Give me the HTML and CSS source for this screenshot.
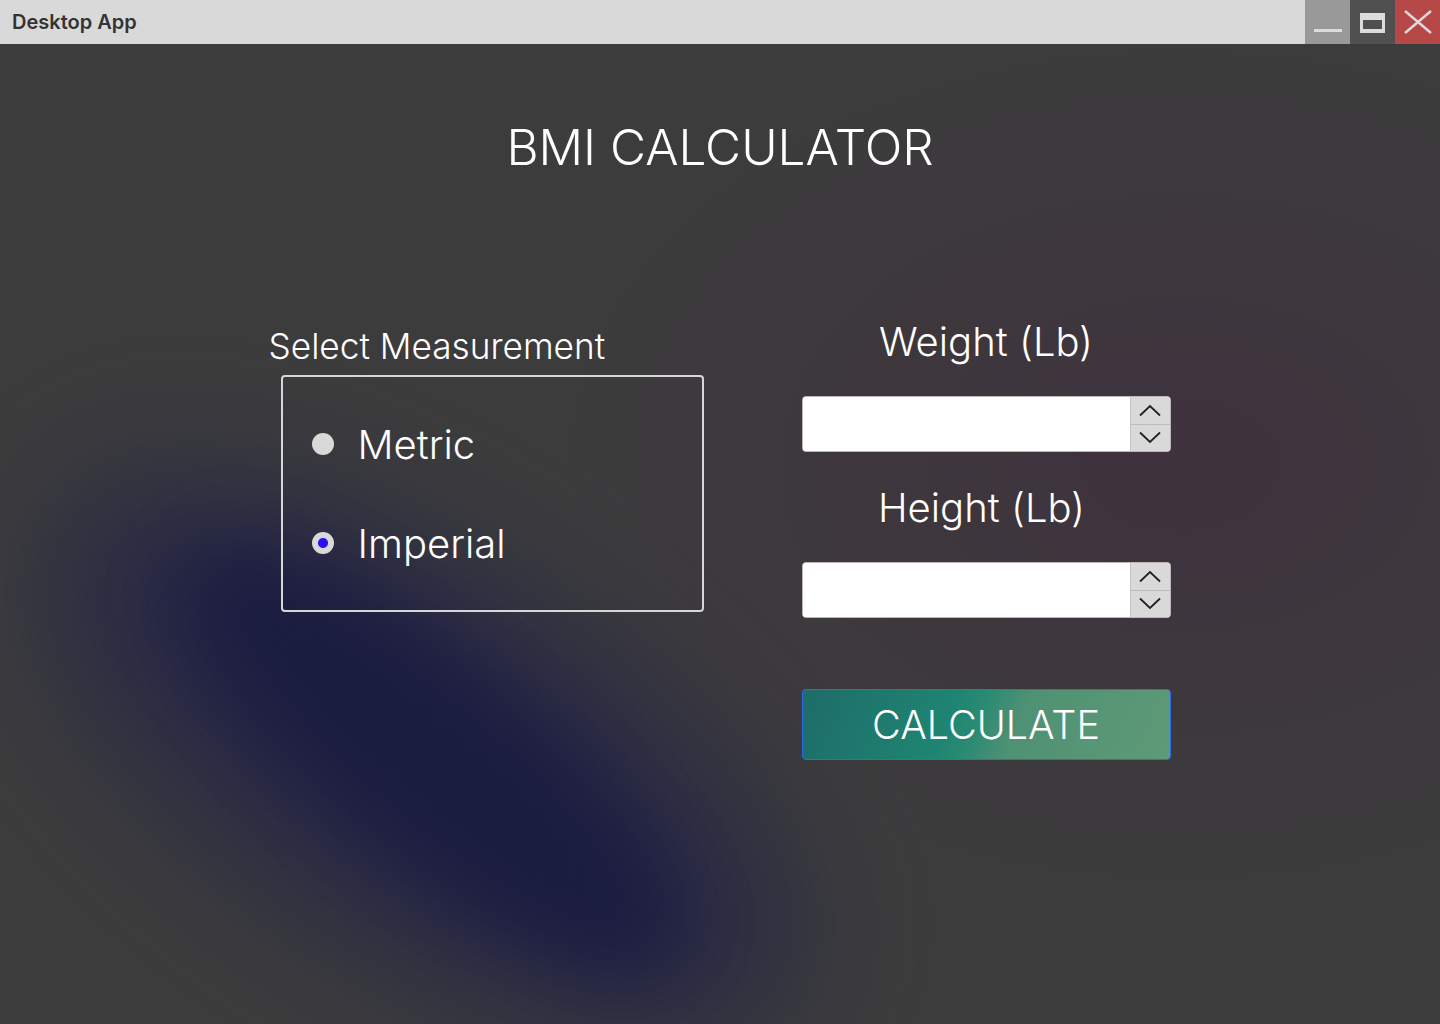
FILE: index.html
```html
<!DOCTYPE html>
<html lang="en">
<head>
<meta charset="utf-8">
<title>Desktop App</title>
<link rel="stylesheet" href="styles.css">
</head>
<body>
<div class="window">
  <header class="titlebar">
    <span class="app-name">Desktop App</span>
    <div class="win-controls">
      <button class="win-btn win-min" aria-label="Minimize"><span class="min-bar"></span></button>
      <button class="win-btn win-max" aria-label="Maximize"><span class="max-box"></span></button>
      <button class="win-btn win-close" aria-label="Close">
        <svg width="28" height="24" viewBox="0 0 28 24"><path d="M1 1 L27 23 M27 1 L1 23" stroke="#dcdcdc" stroke-width="2.4" fill="none"/></svg>
      </button>
    </div>
  </header>
  <main class="app">
    <div class="blob blob-halo"></div>
    <div class="blob blob-core"></div>
    <h1 class="title">BMI CALCULATOR</h1>
    <div class="content">
      <section class="measure">
        <div class="measure-label">Select Measurement</div>
        <div class="measure-box">
          <label class="radio-row"><input type="radio" name="unit" class="radio"><span>Metric</span></label>
          <label class="radio-row"><input type="radio" name="unit" class="radio" checked><span>Imperial</span></label>
        </div>
      </section>
      <section class="fields">
        <div class="field-label">Weight (Lb)</div>
        <div class="spin">
          <input class="spin-input" type="text">
          <div class="spin-btns">
            <button class="spin-btn"><svg width="24" height="13" viewBox="0 0 24 13"><path d="M2 11.5 L12 2 L22 11.5" stroke="#222" stroke-width="1.8" fill="none"/></svg></button>
            <button class="spin-btn"><svg width="24" height="13" viewBox="0 0 24 13"><path d="M2 1.5 L12 11 L22 1.5" stroke="#222" stroke-width="1.8" fill="none"/></svg></button>
          </div>
        </div>
        <div class="field-label second">Height (Lb)</div>
        <div class="spin">
          <input class="spin-input" type="text">
          <div class="spin-btns">
            <button class="spin-btn"><svg width="24" height="13" viewBox="0 0 24 13"><path d="M2 11.5 L12 2 L22 11.5" stroke="#222" stroke-width="1.8" fill="none"/></svg></button>
            <button class="spin-btn"><svg width="24" height="13" viewBox="0 0 24 13"><path d="M2 1.5 L12 11 L22 1.5" stroke="#222" stroke-width="1.8" fill="none"/></svg></button>
          </div>
        </div>
        <button class="calc">CALCULATE</button>
      </section>
    </div>
  </main>
</div>
</body>
</html>
```
FILE: styles.css
```css
* { box-sizing: border-box; }
html, body { margin: 0; padding: 0; }
body {
  width: 1440px;
  height: 1024px;
  overflow: hidden;
  font-family: "Inter", "Noto Sans", sans-serif;
  background: #3c3c3c;
}
.window { display: flex; flex-direction: column; height: 1024px; }

.titlebar {
  height: 44px;
  flex: 0 0 44px;
  background: #d9d9d9;
  display: flex;
  align-items: center;
  justify-content: space-between;
}
.app-name {
  padding-left: 12px;
  font-size: 20px;
  font-weight: 600;
  color: #333;
  padding-bottom: 1px;
}
.win-controls { display: flex; height: 44px; }
.win-btn {
  width: 45px;
  height: 44px;
  border: 0;
  padding: 0;
  margin: 0;
  display: flex;
  align-items: center;
  justify-content: center;
}
.win-min { background: #999999; align-items: flex-end; padding-bottom: 12px; }
.min-bar { display: block; width: 28px; height: 3px; background: #dcdcdc; }
.win-max { background: #505050; }
.max-box {
  display: block;
  width: 25px;
  height: 20px;
  border: 3px solid #dcdcdc;
  border-top-width: 7px;
  border-bottom-width: 4px;
  margin-top: 2px;
}
.win-close { background: #b64848; }

.app {
  position: relative;
  flex: 1;
  overflow: hidden;
  background:
    radial-gradient(ellipse 620px 420px at 1180px 420px, rgba(64, 46, 62, 0.7), rgba(64, 46, 62, 0) 100%),
    #3c3c3c;
  padding-top: 73px;
  color: #fff;
}
.blob {
  position: absolute;
  border-radius: 50%;
  pointer-events: none;
}
.blob-halo {
  left: -10px;
  top: 530px;
  width: 860px;
  height: 370px;
  background: rgba(34, 34, 72, 0.75);
  transform: rotate(33deg);
  filter: blur(70px);
}
.blob-core {
  left: 120px;
  top: 620px;
  width: 620px;
  height: 190px;
  background: #1a1c40;
  transform: rotate(40deg);
  filter: blur(40px);
}
.title {
  position: relative;
  margin: 0;
  text-align: center;
  font-size: 49.5px;
  line-height: 60px;
  font-weight: 300;
  color: #fff;
}
.content {
  position: relative;
  display: flex;
  justify-content: center;
  gap: 98px;
  margin-top: 141px;
}
.measure {
  width: 434px;
  padding-top: 6px;
}
.measure-label {
  font-size: 35.2px;
  line-height: 44px;
  font-weight: 300;
  color: #fff;
  margin-left: -1px;
}
.measure-box {
  margin-top: 7px;
  margin-left: 11px;
  width: 423px;
  height: 237px;
  border: 2px solid #d6d6d6;
  border-radius: 4px;
  padding: 42px 0 42px 29px;
  display: flex;
  flex-direction: column;
  gap: 49px;
}
.radio-row {
  height: 50px;
  display: flex;
  align-items: center;
  gap: 24px;
  font-size: 40px;
  font-weight: 300;
  color: #fff;
}
.radio {
  appearance: none;
  -webkit-appearance: none;
  margin: 0;
  width: 22px;
  height: 22px;
  border-radius: 50%;
  background: #d9d9d9;
}
.radio:checked {
  background: radial-gradient(circle, #2a10f5 0 4.5px, #d9d9d9 5.5px);
}

.fields { width: 369px; display: flex; flex-direction: column; }
.field-label {
  text-align: center;
  font-size: 40px;
  line-height: 48px;
  font-weight: 300;
  color: #fff;
  margin-bottom: 30px;
}
.field-label.second { margin-top: 32px; padding-right: 9px; }
.spin {
  height: 56px;
  display: flex;
  background: #fff;
  border: 1px solid #bdb5b8;
  border-radius: 4px;
  overflow: hidden;
}
.spin-input {
  flex: 1;
  border: 0;
  outline: none;
  background: #fff;
  font-family: inherit;
  font-size: 20px;
  padding: 0 12px;
  min-width: 0;
}
.spin-btns {
  width: 40px;
  display: flex;
  flex-direction: column;
  background: #d9d9d9;
  border-left: 1px solid #c4c4c4;
}
.spin-btn {
  flex: 1;
  border: 0;
  padding: 0;
  margin: 0;
  background: transparent;
  display: flex;
  align-items: center;
  justify-content: center;
}
.spin-btn + .spin-btn { border-top: 1px solid #bcbcbc; }
.calc {
  margin-top: 71px;
  height: 71px;
  border: 1px solid #2c6be6;
  border-radius: 4px;
  background: linear-gradient(112deg, #1e6c69 0%, #1e8572 40%, #2a8a73 47%, #4f9174 58%, #5f9a77 100%);
  color: #fff;
  font-family: inherit;
  font-size: 39.5px;
  font-weight: 300;
  padding: 0;
}
```
